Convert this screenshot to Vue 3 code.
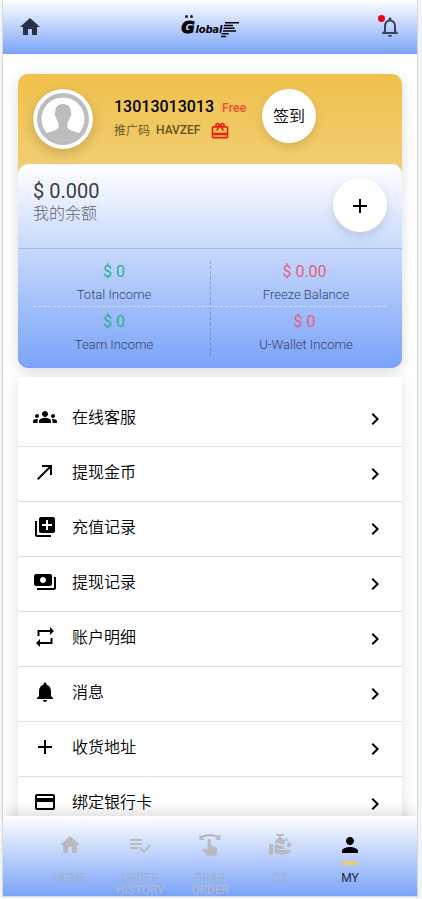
<script setup>
const stats = [
  { value: '$ 0', label: 'Total Income', tone: 'gain' },
  { value: '$ 0.00', label: 'Freeze Balance', tone: 'loss' },
  { value: '$ 0', label: 'Team Income', tone: 'gain' },
  { value: '$ 0', label: 'U-Wallet Income', tone: 'loss' },
]

const home = 'M10 20v-6h4v6h5v-8h3L12 3 2 12h3v8z'
const plus = 'M19 13h-6v6h-2v-6H5v-2h6V5h2v6h6v2z'

const menu = [
  { text: '在线客服', icon: 'M12 12.75c1.63 0 3.07.39 4.24.9 1.08.48 1.76 1.56 1.76 2.73V18H6v-1.61c0-1.18.68-2.26 1.76-2.73 1.17-.52 2.61-.91 4.24-.91zM4 13c1.1 0 2-.9 2-2s-.9-2-2-2-2 .9-2 2 .9 2 2 2zm1.13 1.1c-.37-.06-.74-.1-1.13-.1-.99 0-1.93.21-2.78.58C.48 14.9 0 15.62 0 16.43V18h4.5v-1.61c0-.83.23-1.61.63-2.29zM20 13c1.1 0 2-.9 2-2s-.9-2-2-2-2 .9-2 2 .9 2 2 2zm4 3.43c0-.81-.48-1.53-1.22-1.85-.85-.37-1.79-.58-2.78-.58-.39 0-.76.04-1.13.1.4.68.63 1.46.63 2.29V18H24v-1.57zM12 6c1.66 0 3 1.34 3 3s-1.34 3-3 3-3-1.34-3-3 1.34-3 3-3z' },
  { text: '提现金币', icon: 'M9 5v2h6.59L4 18.59 5.41 20 17 8.41V15h2V5z' },
  { text: '充值记录', icon: 'M4 6H2v14c0 1.1.9 2 2 2h14v-2H4V6zm16-4H8c-1.1 0-2 .9-2 2v12c0 1.1.9 2 2 2h12c1.1 0 2-.9 2-2V4c0-1.1-.9-2-2-2zm-1 9h-4v4h-2v-4H9V9h4V5h2v4h4v2z' },
  { text: '提现记录', icon: 'M19 14V6c0-1.1-.9-2-2-2H3c-1.1 0-2 .9-2 2v8c0 1.1.9 2 2 2h14c1.1 0 2-.9 2-2zm-9-1c-1.66 0-3-1.34-3-3s1.34-3 3-3 3 1.34 3 3-1.34 3-3 3zm13-6v11c0 1.1-.9 2-2 2H4v-2h17V7h2z' },
  { text: '账户明细', icon: 'M4.500 5H17V2l4 4-4 4V7H6.500v4h-2zM19.500 19H7v3l-4-4 4-4v3h10.500v-4h2z' },
  { text: '消息', icon: 'M12 22c1.1 0 2-.9 2-2h-4c0 1.1.89 2 2 2zm6-6v-5c0-3.07-1.64-5.64-4.5-6.32V4c0-.83-.67-1.5-1.5-1.5s-1.500.67-1.500 1.5v.68C7.63 5.36 6 7.92 6 11v5l-2 2v1h16v-1l-2-2z' },
  { text: '收货地址', icon: plus },
  { text: '绑定银行卡', icon: 'M20 4H4c-1.11 0-1.99.89-1.99 2L2 18c0 1.11.89 2 2 2h16c1.11 0 2-.89 2-2V6c0-1.11-.89-2-2-2zm0 14H4v-6h16v6zm0-10H4V6h16v2z' },
]

const tabs = [
  { label: 'HOME', icon: home },
  { label: 'ORDER HISTORY', icon: 'M14 10H2v2h12v-2zm0-4H2v2h12V6zM2 16h8v-2H2v2zm19.5-4.5L23 13l-6.99 7-4.510-4.500L13 14l3.010 3 5.490-5.500z' },
  { label: 'GRAB ORDER', icon: 'M1.500 1.500 3.300 3.200C8 .2 16 .2 20.700 3.200l1.800-1.700V7h-5.500l2-2C15 2.500 9 2.500 5 5l2 2H1.500zM9.500 7.500a1.700 1.700 0 0 1 3.400 0V12.500h1l4.400 2.200c.8.400 1.100 1 1 1.800l-.8 5c-.1.800-.6 1.200-1.400 1.200h-6.500c-.5 0-1-.2-1.300-.5L4 16.900l.8-.8c.3-.3.700-.4 1.100-.3l3.600.8z' },
  { label: 'CS', icon: 'M8 1h8v1.800h-3V5c2 .3 3.600 1.400 4 3.300l-1 3.200h-2.500L10.500 10H6.500C7 7.500 8.600 5.500 11 5V2.800H8zM1 11h4v11H1zM6.500 11.500H9l6.300 2.300c.9.400 1.300 1.200.9 2.200h-4.800l-2-.7-.3.800 2.300.9H21c1.100 0 2 .8 2 2l-8 3-8.500-2zM18.500 4.500s1.400 1.600 1.400 2.400a1.400 1.400 0 0 1-2.800 0c0-.8 1.400-2.400 1.400-2.400zM21 8.500s2 2.500 2 3.700a2 2 0 0 1-4 0c0-1.200 2-3.700 2-3.700z' },
  { label: 'MY', icon: 'M12 12c2.210 0 4-1.790 4-4s-1.790-4-4-4-4 1.790-4 4 1.790 4 4 4zm0 2c-2.670 0-8 1.340-8 4v2h16v-2c0-2.660-5.330-4-8-4z', active: true },
]
</script>

<template>
  <div class="page">
    <header class="topbar">
      <svg class="icon top-icon" viewBox="0 0 24 24"><path :d="home" /></svg>
      <div class="logo">
        <div class="logo-g"><i></i><i></i><b>G</b></div>
        <span class="logo-name">lobal</span>
        <svg class="logo-lines" viewBox="0 0 18 18">
          <path d="M4 1h14v1.500H4zM3 3.800h9v1.400H3zM2.500 6.500h11V8h-11zM2 9.200h13v1.500H2zM.5 12h7v1.400h-7zM0 14.700h5v1.500H0z" />
        </svg>
      </div>
      <div class="bell">
        <svg class="icon top-icon" viewBox="0 0 24 24"><path d="M12 22c1.100 0 2-.9 2-2h-4c0 1.100.9 2 2 2zm6-6v-5c0-3.070-1.630-5.640-4.500-6.320V4c0-.83-.67-1.500-1.500-1.500s-1.500.67-1.500 1.500v.68C7.640 5.360 6 7.920 6 11v5l-2 2v1h16v-1l-2-2zm-2 1H8v-6c0-2.480 1.510-4.500 4-4.500s4 2.020 4 4.500v6z" /></svg>
        <span class="dot"></span>
      </div>
    </header>

    <main class="content">
      <section class="account">
        <div class="profile">
          <svg class="avatar" viewBox="0 0 60 60">
            <circle cx="30" cy="30" r="30" fill="#fff" />
            <circle cx="30" cy="30" r="23.700" fill="#fff" stroke="#bdbdbd" stroke-width="4.500" />
            <path fill="#bdbdbd" d="M30 15c5 0 8 3 7.700 8 1.300.8.600 4.500-.7 5-.4 2.600-1.300 4.200-2.500 5.400v5c1.200 3.300 7.500 3.400 12.500 6.300A24 24 0 0 1 13 44.700c5-2.900 11.300-3 12.500-6.300v-5c-1.200-1.200-2.100-2.800-2.500-5.400-1.300-.5-2-4.200-.7-5-.3-5 2.700-8 7.700-8z" />
          </svg>
          <div class="identity">
            <div class="line"><span class="phone">13013013013</span><span class="free">Free</span></div>
            <div class="line code-line">
              <span class="code-name">推广码</span><b>HAVZEF</b>
              <svg class="gift" viewBox="0 0 24 24"><path d="M20 6h-2.180c.11-.31.18-.65.18-1 0-1.660-1.340-3-3-3-1.050 0-1.960.54-2.500 1.350l-.5.67-.5-.68C10.960 2.540 10.050 2 9 2 7.340 2 6 3.340 6 5c0 .35.070.69.180 1H4c-1.110 0-1.990.89-1.990 2L2 19c0 1.110.89 2 2 2h16c1.110 0 2-.89 2-2V8c0-1.110-.89-2-2-2zm-5-2c.55 0 1 .45 1 1s-.45 1-1 1-1-.45-1-1 .45-1 1-1zM9 4c.55 0 1 .45 1 1s-.45 1-1 1-1-.45-1-1 .45-1 1-1zm11 15H4v-2h16v2zm0-5H4V8h5.080L7 10.830 8.620 12 11 8.760l1-1.360 1 1.360L15.380 12 17 10.830 14.920 8H20v6z" /></svg>
            </div>
          </div>
          <button class="round">签到</button>
        </div>

        <div class="wallet">
          <div class="balance">
            <div>
              <div class="amount">$ 0.000</div>
              <div class="caption">我的余额</div>
            </div>
            <button class="round add"><svg class="icon" viewBox="0 0 24 24"><path :d="plus" /></svg></button>
          </div>
          <div class="stats">
            <div v-for="s in stats" :key="s.label" class="stat">
              <div class="value" :class="s.tone">{{ s.value }}</div>
              <div class="label">{{ s.label }}</div>
            </div>
          </div>
        </div>
      </section>

      <nav class="menu">
        <div v-for="m in menu" :key="m.text" class="row">
          <svg class="icon" viewBox="0 0 24 24"><path :d="m.icon" /></svg>
          <span class="row-text">{{ m.text }}</span>
          <svg class="icon chevron" viewBox="0 0 24 24"><path d="M10 6 8.590 7.410 13.170 12l-4.580 4.590L10 18l6-6z" /></svg>
        </div>
      </nav>
    </main>

    <footer class="tabs">
      <div v-for="t in tabs" :key="t.label" class="tab" :class="{ active: t.active }">
        <svg class="icon" viewBox="0 0 24 24"><path :d="t.icon" /></svg>
        <span class="mark"></span>
        <span class="tab-label">{{ t.label }}</span>
      </div>
    </footer>
  </div>
</template>

<style>
body {
  background: #f1f3f4;
  overflow: hidden;
}
</style>

<style scoped>
* {
  box-sizing: border-box;
}
.page {
  width: 416px;
  height: 897px;
  margin-left: 2px;
  border: solid #d6d8da;
  border-width: 0 1px 1px;
  background: #fff;
  display: flex;
  flex-direction: column;
  overflow: hidden;
  font-family: Roboto, "Noto Sans CJK SC", sans-serif;
  color: #000;
}
.icon {
  width: 24px;
  height: 24px;
  fill: currentColor;
  flex: none;
  display: block;
}
.topbar {
  height: 54px;
  flex: none;
  padding: 0 15px 1px;
  display: flex;
  align-items: center;
  justify-content: space-between;
  background: linear-gradient(#fff, #7aa3f8);
}
.top-icon {
  color: #2b3145;
}
.bell {
  position: relative;
}
.bell .top-icon {
  color: #39425e;
}
.dot {
  position: absolute;
  left: 0;
  top: 0;
  width: 7px;
  height: 7px;
  border-radius: 50%;
  background: #f00014;
}
.logo {
  display: flex;
  align-items: flex-end;
  height: 24px;
  font-family: "DejaVu Sans", sans-serif;
  font-style: italic;
  font-weight: bold;
}
.logo-g {
  width: 14px;
  height: 24px;
  display: grid;
  grid-template-columns: 3px 3px;
  justify-content: center;
  column-gap: 2px;
  grid-template-rows: 4px 18px;
}
.logo-g i {
  height: 3px;
  border-radius: 50%;
  background: #17213a;
}
.logo-g b {
  grid-column: 1 / 3;
  margin-left: -3px;
  font-size: 16px;
  line-height: 17px;
  -webkit-text-stroke: 1.2px #000;
}
.logo-name {
  width: 26px;
  font-size: 10px;
  line-height: 12px;
  letter-spacing: -0.2px;
  padding-bottom: 3px;
}
.logo-lines {
  width: 18px;
  height: 18px;
  margin-left: -1px;
}
.content {
  flex: 1;
  min-height: 0;
  padding: 20px 15px 0;
  overflow: hidden;
}
.account {
  height: 294px;
  border-radius: 10px;
  background: linear-gradient(#efc04a, #f2d07a 110px);
  box-shadow: 0 3px 14px rgba(0, 0, 0, 0.14);
}
.profile {
  height: 90px;
  padding: 15px;
  display: flex;
  align-items: flex-start;
}
.avatar {
  width: 60px;
  height: 60px;
  flex: none;
  border-radius: 50%;
  box-shadow: 0 4px 12px rgba(0, 0, 0, 0.18);
}
.identity {
  width: 148px;
  margin-left: 21px;
  padding-top: 7px;
}
.line {
  display: flex;
  align-items: center;
  height: 21px;
  white-space: nowrap;
}
.phone {
  font-size: 16px;
  font-weight: 500;
}
.free {
  margin-left: 8px;
  padding-top: 2px;
  font-size: 12.5px;
  font-weight: 500;
  color: #f0502c;
}
.code-line {
  height: 25px;
  font-size: 12px;
  color: #65501f;
}
.code-name {
  font-weight: 350;
}
.code-line b {
  font-weight: 500;
  margin-left: 6px;
}
.gift {
  width: 20px;
  height: 20px;
  margin: 3px 0 0 10px;
  fill: #f0200c;
}
.round {
  width: 54px;
  height: 54px;
  flex: none;
  padding: 0 0 2px;
  border: 0;
  border-radius: 50%;
  background: #fff;
  color: #000;
  display: flex;
  align-items: center;
  justify-content: center;
  font: 350 16px Roboto, "Noto Sans CJK SC", sans-serif;
  box-shadow: 0 4px 10px rgba(0, 0, 0, 0.12);
}
.add {
  padding: 2px 0 0;
}
.wallet {
  height: 204px;
  border-radius: 10px;
  background: linear-gradient(#fff, #7aa3f8);
}
.balance {
  height: 85px;
  padding: 14px 15px 0;
  border-bottom: 1px solid rgba(70, 90, 150, 0.25);
  display: flex;
  justify-content: space-between;
  align-items: flex-start;
}
.amount {
  font-size: 20px;
  line-height: 26px;
  color: #3a3d45;
}
.caption {
  font-size: 16px;
  line-height: 20px;
  font-weight: 300;
  color: #5c6170;
}
.stats {
  margin: 12px 15px 0;
  display: grid;
  grid-template-columns: 177px 176px;
  position: relative;
}
.stats::after {
  content: "";
  position: absolute;
  left: 177px;
  top: 0;
  height: 95px;
  border-left: 1px dashed rgba(60, 90, 170, 0.4);
}
.stat {
  height: 50px;
  text-align: center;
}
.stat:nth-child(odd) {
  padding-right: 15px;
}
.stat:nth-child(even) {
  padding-left: 13px;
}
.stat:nth-child(even) .label {
  padding-left: 3px;
}
.stat:nth-child(-n + 2) {
  height: 46px;
  border-bottom: 1px dashed rgba(255, 255, 255, 0.45);
}
.stat:nth-child(n + 3) {
  padding-top: 4px;
}
.value {
  font-size: 16px;
  line-height: 22px;
}
.gain {
  color: #27b18a;
}
.loss {
  color: #e2607c;
}
.label {
  font-size: 13px;
  line-height: 24px;
  font-weight: 300;
  color: #34436c;
}
.menu {
  margin-top: 9px;
  padding-top: 15px;
  background: #fff;
  box-shadow: 0 3px 14px rgba(0, 0, 0, 0.12);
}
.row {
  height: 55px;
  padding: 0 15px;
  border-bottom: 1px solid #dedede;
  display: flex;
  align-items: center;
}
.row > .icon:first-child {
  margin-top: -5px;
}
.row-text {
  flex: 1;
  margin: -2px 0 0 15px;
  font-size: 16px;
  line-height: 24px;
  font-weight: 350;
}
.tabs {
  height: 80px;
  flex: none;
  position: relative;
  padding: 17px 32px 0;
  display: flex;
  background: linear-gradient(#fff, #7aa3f8);
  box-shadow: 0 -3px 14px rgba(0, 0, 0, 0.15);
}
.tab {
  width: 70px;
  display: flex;
  flex-direction: column;
  align-items: center;
  color: #b8babd;
}
.mark {
  width: 16px;
  height: 4px;
  margin-top: 4px;
}
.tab-label {
  width: 60px;
  margin-top: 7px;
  font-size: 12px;
  line-height: 12px;
  text-align: center;
  color: #b4bac6;
}
.tab-label::first-line {
  color: #a3b0cc;
}
.active {
  color: #000;
}
.active .mark {
  background: #ebcb78;
}
.active .tab-label::first-line {
  color: #20283c;
}
</style>
